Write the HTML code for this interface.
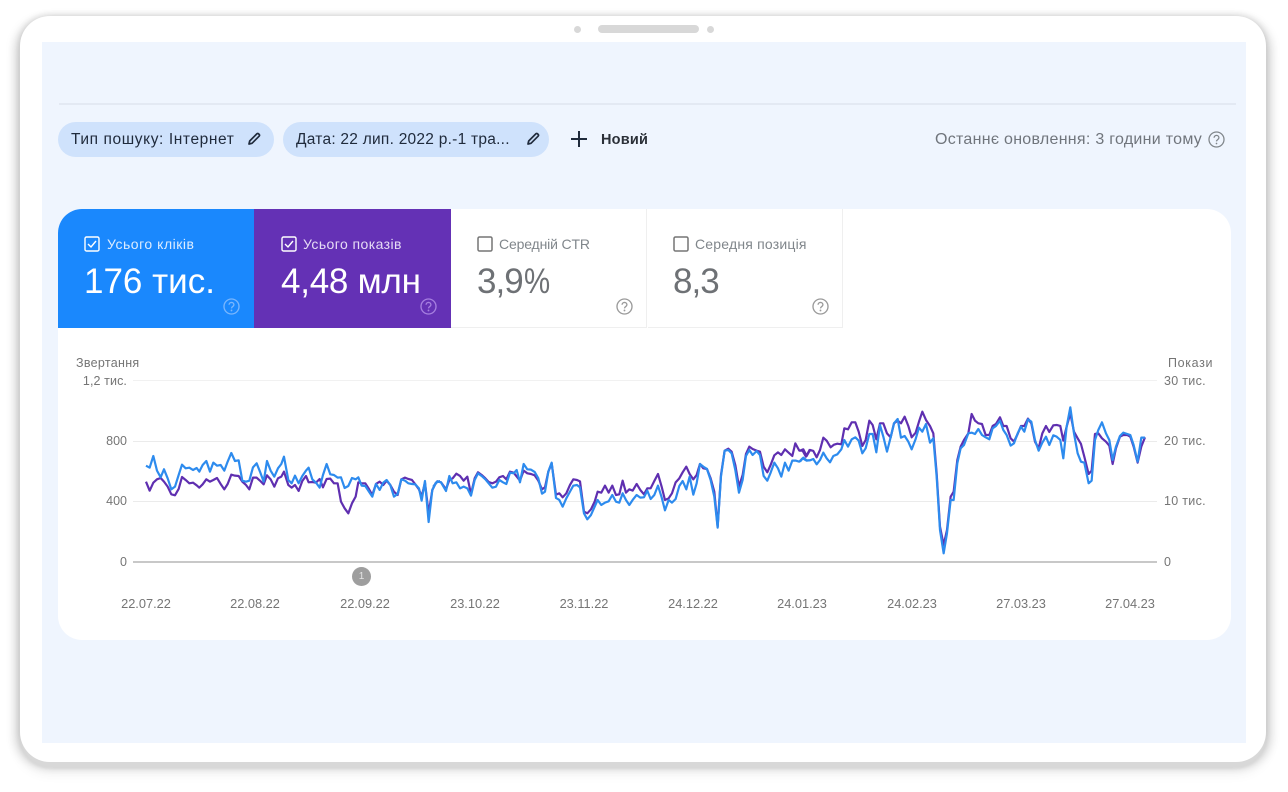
<!DOCTYPE html>
<html lang="uk"><head><meta charset="utf-8"><title>Search Console</title>
<style>
html,body{margin:0;padding:0;width:1288px;height:792px;overflow:hidden;background:#fff}
body{position:relative;font-family:"Liberation Sans",sans-serif;filter:blur(.25px)}
.a{position:absolute;white-space:nowrap;line-height:1}
.dev{position:absolute;left:20px;top:16px;width:1246px;height:746px;background:#fff;border-radius:30px;box-shadow:0 6px 2px #d8d8d8,0 8px 14px rgba(0,0,0,.12),-5px 3px 10px rgba(0,0,0,.13),5px 3px 10px rgba(0,0,0,.13),0 -2px 7px rgba(0,0,0,.07)}
.in{position:absolute;left:42px;top:42px;width:1204px;height:701px;background:#eff5fe}
.chip{position:absolute;top:122px;height:35px;background:#cfe2fc;border-radius:18px}
.card{position:absolute;left:58px;top:209px;width:1173px;height:431px;background:#fff;border-radius:24px}
.tab{position:absolute;top:209px;height:119px}
.t1{font-size:14px;color:#fff}
.t2{font-size:35px}
.ax{font-size:12.5px;color:#757575}
.dt{font-size:12.8px;color:#757575;width:80px;text-align:center;top:598px}
svg{position:absolute;overflow:visible}
</style></head><body>
<div class="dev"></div>
<div class="in"></div>
<div class="a" style="left:574px;top:26px;width:7px;height:7px;border-radius:50%;background:#d8d8d8"></div>
<div class="a" style="left:598px;top:25px;width:101px;height:8px;border-radius:4px;background:#d8d8d8"></div>
<div class="a" style="left:707px;top:26px;width:7px;height:7px;border-radius:50%;background:#d8d8d8"></div>
<div class="a" style="left:59px;top:103px;width:1177px;height:2px;background:#e3e9f3"></div>

<div class="chip" style="left:58px;width:216px"></div>
<div class="chip" style="left:283px;width:266px"></div>
<div class="a" style="left:71px;top:132px;font-size:15.5px;color:#202b3c;letter-spacing:.6px">Тип пошуку: Інтернет</div>
<div class="a" style="left:296px;top:132px;font-size:15.5px;color:#202b3c;letter-spacing:.25px">Дата: 22 лип. 2022 р.-1 тра...</div>
<svg style="left:246px;top:131px" width="16" height="16" viewBox="0 0 16 16"><path d="M3 13l.7-3L10.8 2.9a1.3 1.3 0 0 1 1.8 0l.5.5a1.3 1.3 0 0 1 0 1.8L6 12.3z" fill="none" stroke="#202b3c" stroke-width="1.7" stroke-linejoin="round"/></svg>
<svg style="left:525px;top:131px" width="16" height="16" viewBox="0 0 16 16"><path d="M3 13l.7-3L10.8 2.9a1.3 1.3 0 0 1 1.8 0l.5.5a1.3 1.3 0 0 1 0 1.8L6 12.3z" fill="none" stroke="#202b3c" stroke-width="1.7" stroke-linejoin="round"/></svg>
<svg style="left:571px;top:131px" width="16" height="16" viewBox="0 0 16 16"><path d="M8 0v16M0 8h16" stroke="#202b3c" stroke-width="2"/></svg>
<div class="a" style="left:601px;top:133px;font-size:14.5px;font-weight:bold;color:#2b3038;letter-spacing:.2px">Новий</div>
<div class="a" style="left:935px;top:132px;font-size:16px;color:#70757c;letter-spacing:.28px">Останнє оновлення: 3 години тому</div>
<svg style="left:1208px;top:131px" width="17" height="17" viewBox="0 0 24 24"><circle cx="12" cy="12" r="10.6" fill="none" stroke="#80868b" stroke-width="1.8"/><path d="M8.6 9.6a3.4 3.4 0 0 1 6.8 0c0 2.4-3.4 2.6-3.4 5" fill="none" stroke="#80868b" stroke-width="1.8"/><circle cx="12" cy="17.6" r="1.2" fill="#80868b"/></svg>

<div class="card"></div>
<div class="tab" style="left:58px;width:197px;background:#1a88fd;border-top-left-radius:24px"></div>
<div class="tab" style="left:254px;width:197px;background:#6431b5"></div>
<div class="tab" style="left:451px;width:195px;border-right:1.5px solid #efefef;border-bottom:1.5px solid #efefef;height:118px"></div>
<div class="tab" style="left:647.5px;width:194.5px;border-right:1.5px solid #efefef;border-bottom:1.5px solid #efefef;height:118px"></div>

<svg style="left:84px;top:236px" width="16" height="16" viewBox="0 0 16 16"><rect x="1" y="1" width="14" height="14" rx="1.5" fill="none" stroke="#fff" stroke-width="1.4"/><path d="M4 8l3 3 5-6" fill="none" stroke="#fff" stroke-width="1.4"/></svg>
<svg style="left:281px;top:236px" width="16" height="16" viewBox="0 0 16 16"><rect x="1" y="1" width="14" height="14" rx="1.5" fill="none" stroke="#fff" stroke-width="1.4"/><path d="M4 8l3 3 5-6" fill="none" stroke="#fff" stroke-width="1.4"/></svg>
<svg style="left:477px;top:236px" width="16" height="16" viewBox="0 0 16 16"><rect x="1" y="1" width="14" height="14" rx="1.5" fill="none" stroke="#757575" stroke-width="1.5"/></svg>
<svg style="left:673px;top:236px" width="16" height="16" viewBox="0 0 16 16"><rect x="1" y="1" width="14" height="14" rx="1.5" fill="none" stroke="#757575" stroke-width="1.5"/></svg>

<div class="a t1" style="left:107px;top:237px;color:#dcecff;letter-spacing:.52px">Усього кліків</div>
<div class="a t1" style="left:303px;top:237px;color:#e6dcf5;letter-spacing:.43px">Усього показів</div>
<div class="a t1" style="left:499px;top:237px;color:#80868b;letter-spacing:-.15px">Середній CTR</div>
<div class="a t1" style="left:695px;top:237px;color:#80868b;letter-spacing:.2px">Середня позиція</div>
<div class="a t2" style="left:84px;top:264px;color:#fff">176 тис.</div>
<div class="a t2" style="left:281px;top:264px;color:#fff;letter-spacing:-.25px">4,48 млн</div>
<div class="a t2" style="left:477px;top:264px;color:#6e7175;letter-spacing:-1px">3,9<span style="display:inline-block;transform:scaleX(.84);transform-origin:left;letter-spacing:0;margin-left:1px">%</span></div>
<div class="a t2" style="left:673px;top:264px;color:#6e7175;letter-spacing:-1px">8,3</div>

<svg style="left:223px;top:298px" width="17" height="17" viewBox="0 0 24 24"><g fill="none" stroke="#79b6fd" stroke-width="1.9"><circle cx="12" cy="12" r="10.6"/><path d="M8.6 9.6a3.4 3.4 0 0 1 6.8 0c0 2.4-3.4 2.6-3.4 5"/></g><circle cx="12" cy="17.6" r="1.3" fill="#79b6fd"/></svg>
<svg style="left:420px;top:298px" width="17" height="17" viewBox="0 0 24 24"><g fill="none" stroke="#a67fe0" stroke-width="1.9"><circle cx="12" cy="12" r="10.6"/><path d="M8.6 9.6a3.4 3.4 0 0 1 6.8 0c0 2.4-3.4 2.6-3.4 5"/></g><circle cx="12" cy="17.6" r="1.3" fill="#a67fe0"/></svg>
<svg style="left:616px;top:298px" width="17" height="17" viewBox="0 0 24 24"><g fill="none" stroke="#9a9a9a" stroke-width="1.9"><circle cx="12" cy="12" r="10.6"/><path d="M8.6 9.6a3.4 3.4 0 0 1 6.8 0c0 2.4-3.4 2.6-3.4 5"/></g><circle cx="12" cy="17.6" r="1.3" fill="#9a9a9a"/></svg>
<svg style="left:812px;top:298px" width="17" height="17" viewBox="0 0 24 24"><g fill="none" stroke="#9a9a9a" stroke-width="1.9"><circle cx="12" cy="12" r="10.6"/><path d="M8.6 9.6a3.4 3.4 0 0 1 6.8 0c0 2.4-3.4 2.6-3.4 5"/></g><circle cx="12" cy="17.6" r="1.3" fill="#9a9a9a"/></svg>

<div class="a ax" style="left:76px;top:357px;letter-spacing:.3px">Звертання</div>
<div class="a ax" style="left:1168px;top:357px;letter-spacing:.65px">Покази</div>
<div class="a ax" style="right:1161px;top:375px;letter-spacing:.1px">1,2 тис.</div>
<div class="a ax" style="right:1161px;top:435px">800</div>
<div class="a ax" style="right:1161px;top:495px">400</div>
<div class="a ax" style="right:1161px;top:556px">0</div>
<div class="a ax" style="left:1164px;top:375px;letter-spacing:.3px">30 тис.</div>
<div class="a ax" style="left:1164px;top:435px;letter-spacing:.3px">20 тис.</div>
<div class="a ax" style="left:1164px;top:495px;letter-spacing:.3px">10 тис.</div>
<div class="a ax" style="left:1164px;top:556px">0</div>

<div class="a" style="left:133px;top:380px;width:1024px;height:1px;background:#f1f1f1"></div>
<div class="a" style="left:133px;top:441px;width:1024px;height:1px;background:#ebebeb"></div>
<div class="a" style="left:133px;top:501px;width:1024px;height:1px;background:#ebebeb"></div>
<div class="a" style="left:133px;top:561px;width:1024px;height:2px;background:#c8c8c8"></div>

<svg style="left:0;top:0" width="1288" height="792" viewBox="0 0 1288 792">
<g fill="none" stroke="#5f2fb0" stroke-width="6.6" stroke-linejoin="round">
<polyline transform="translate(60 350) scale(.3333)" points="258,395 269,422 280,398 291,388 302,384 312,395 323,410 334,433 345,436 356,417 366,381 377,390 388,400 399,398 410,406 418,413 428,403 439,388 450,395 460,390 471,384 482,402 493,418 503,402 514,374 525,377 536,378 547,395 558,405 568,418 579,383 590,383 600,392 611,403 621,376 632,388 643,410 654,385 664,380 672,365 685,405 695,413 705,405 716,423 727,393 738,378 746,397 757,396 768,398 779,387 789,412 800,387 811,386 822,400 833,400 843,455 854,475 865,490 876,460 887,440 895,397 905,400 916,400 927,417 937,435 948,402 959,395 970,405 980,392 991,405 1002,425 1013,435 1024,388 1035,383 1045,387 1056,390 1066,403 1077,418 1085,440 1095,398 1106,490 1117,420 1128,398 1140,393"/>
<polyline transform="translate(430 350) scale(.3333)" points="10,410 22,394 33,397 48,418 58,390 68,385 79,371 90,378 101,392 112,380 123,432 134,385 144,367 155,375 166,385 176,396 187,400 198,395 208,382 219,378 229,388 240,365 251,368 262,382 270,392 281,362 292,370 303,372 314,376 325,392 336,418 345,412 355,365 365,340 378,434 388,430 398,442 409,430 420,405 430,388 441,390 450,394 462,485 472,490 483,478 494,455 503,425 514,428 525,407 536,428 547,407 558,435 568,433 578,392 588,428 598,418 608,422 620,402 631,420 642,433 652,415 662,415 673,393 684,372 695,410 705,450 716,445 726,430 737,397 748,385 758,367 769,350 779,372 790,388 800,375 810,342 820,355 831,357 842,385 853,425 863,530 873,375 884,302 895,296 905,305 916,345 927,410 938,375 948,312 958,290 968,297 980,302 990,305 1001,350 1012,367 1022,345 1033,316 1044,307 1054,315 1065,298 1076,308 1087,318 1096,280 1108,302 1118,302 1128,320 1140,298"/>
<polyline transform="translate(800 350) scale(.3333)" points="0,302 10,298 20,318 30,300 40,303 50,322 60,300 70,263 80,272 92,292 102,284 112,281 124,283 133,235 144,238 155,217 166,217 176,245 187,288 197,270 208,212 218,225 229,268 240,220 250,220 261,250 272,262 282,220 293,212 303,220 314,200 325,228 335,262 347,248 357,215 367,185 378,210 390,228 400,250 410,370 420,530 431,585 441,540 452,440 461,425 472,330 482,290 492,270 505,250 515,192 525,212 535,220 546,222 557,255 568,255 578,228 588,222 600,202 610,228 620,228 632,265 642,275 653,252 663,228 673,228 684,206 694,220 705,275 716,295 727,250 738,228 748,246 760,226 770,225 781,228 790,272 800,230 811,190 822,245 833,265 843,282 853,320 866,372 875,362 885,252 895,250 906,265 918,275 928,287 938,342 948,295 960,260 970,255 982,255 991,260 1001,290 1013,338 1024,290 1035,262"/>
</g>
<g fill="none" stroke="#2d8bee" stroke-width="6.6" stroke-linejoin="round">
<polyline transform="translate(60 350) scale(.3333)" points="258,347 269,353 280,318 291,362 302,382 312,358 323,385 334,418 345,410 356,375 366,344 377,355 388,353 399,360 410,354 418,365 428,345 439,333 450,365 460,338 471,347 482,345 493,362 503,335 514,309 525,333 536,331 547,392 558,395 568,392 579,352 590,340 600,365 611,395 621,333 632,362 643,380 654,355 664,342 672,320 685,390 695,400 705,377 716,400 727,378 738,362 746,353 757,388 768,398 779,413 789,375 800,342 811,373 822,375 833,383 843,382 854,414 865,408 876,384 887,388 895,382 905,407 916,408 927,425 937,440 948,402 959,420 970,398 980,390 991,405 1002,440 1013,432 1024,388 1035,392 1045,400 1056,402 1066,403 1077,415 1085,452 1095,393 1106,516 1117,420 1128,398 1140,393"/>
<polyline transform="translate(430 350) scale(.3333)" points="10,410 22,394 33,397 48,423 58,378 68,400 79,397 90,415 101,410 112,415 123,437 134,390 144,370 155,378 166,388 176,400 187,413 198,410 208,390 219,397 229,402 240,368 251,370 260,360 270,397 281,342 292,358 303,359 314,366 325,385 336,431 345,425 355,365 365,338 378,444 388,450 398,470 409,445 420,425 430,407 441,405 450,412 462,490 472,508 483,495 494,470 503,450 514,465 525,458 536,454 547,435 558,455 568,458 578,430 588,450 598,465 608,450 620,435 631,443 642,442 652,422 662,447 673,435 684,407 695,442 705,481 716,450 726,458 737,447 748,408 758,393 769,418 779,380 790,434 800,400 810,342 820,350 831,357 842,390 853,440 863,533 873,380 884,302 895,300 905,310 916,360 927,428 938,390 948,318 958,300 968,315 980,303 990,315 1001,378 1012,392 1022,368 1033,338 1044,355 1054,380 1065,338 1076,362 1087,332 1098,332 1108,335 1118,325 1130,332 1140,331"/>
<polyline transform="translate(800 350) scale(.3333)" points="0,335 10,323 20,331 30,331 40,327 50,343 60,330 70,308 80,325 90,337 100,318 112,313 124,298 133,270 144,290 155,268 166,262 176,272 187,310 197,295 208,252 218,252 229,307 240,225 250,260 261,305 272,262 282,220 293,207 303,263 314,258 325,275 335,298 347,267 357,233 367,245 378,222 390,278 400,265 410,380 420,540 431,610 441,550 452,450 461,450 472,340 482,295 492,285 505,250 515,248 525,252 535,237 546,255 557,262 568,268 578,235 588,228 600,212 610,240 620,255 632,287 642,280 653,250 663,230 673,245 684,208 694,215 705,270 716,302 727,278 738,260 748,285 760,256 770,260 781,270 790,325 800,230 811,172 822,250 833,310 843,335 853,338 866,400 875,392 885,270 895,240 906,217 918,250 928,270 938,330 948,290 960,258 970,248 982,252 991,255 1001,285 1013,335 1024,263 1035,263"/>
</g>
</svg>

<div class="a" style="left:352px;top:567px;width:19px;height:19px;border-radius:50%;background:#9e9e9e;color:#e4e4e4;font-size:10px;line-height:19px;text-align:center">1</div>

<div class="a dt" style="left:106px">22.07.22</div>
<div class="a dt" style="left:215px">22.08.22</div>
<div class="a dt" style="left:325px">22.09.22</div>
<div class="a dt" style="left:435px">23.10.22</div>
<div class="a dt" style="left:544px">23.11.22</div>
<div class="a dt" style="left:653px">24.12.22</div>
<div class="a dt" style="left:762px">24.01.23</div>
<div class="a dt" style="left:872px">24.02.23</div>
<div class="a dt" style="left:981px">27.03.23</div>
<div class="a dt" style="left:1090px">27.04.23</div>
</body></html>
